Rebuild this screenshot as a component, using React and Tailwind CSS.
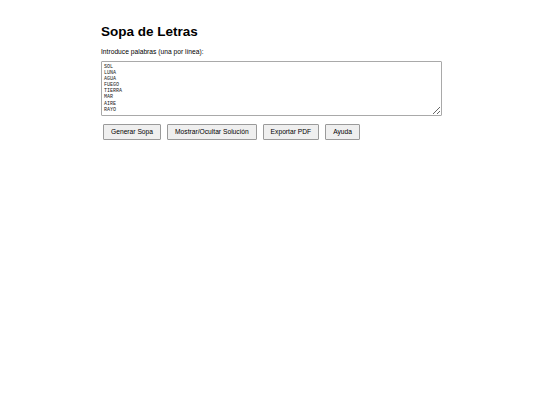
import React from 'react';

const palabras = ['SOL', 'LUNA', 'AGUA', 'FUEGO', 'TIERRA', 'MAR', 'AIRE', 'RAYO'];

const botones = ['Generar Sopa', 'Mostrar/Ocultar Solución', 'Exportar PDF', 'Ayuda'];

export default function App() {
  return (
    <div className="w-[540px] h-[405px] bg-white font-['Liberation_Sans',Arial,sans-serif] text-black">
      <div className="pl-[101px] pt-[23px]">
        <h1 className="text-[13.5px] leading-[17px] font-bold">Sopa de Letras</h1>
        <p className="mt-[8px] text-[6.7px] leading-[8px]">Introduce palabras (una por línea):</p>
        <textarea
          className="mt-[5px] block w-[341px] h-[55px] border border-[#a9a9a9] rounded-[1px] px-[2px] pt-[2px] font-['Liberation_Mono',monospace] text-[5px] leading-[6.1px] text-[#222] resize-y"
          defaultValue={palabras.join('\n')}
        />
        <div className="mt-[8px] ml-[2px] flex gap-[6px]">
          {botones.map((b) => (
            <button
              key={b}
              className="h-[16px] px-[7px] bg-[#efefef] border border-[#9a9a9a] rounded-[1px] text-[6.7px] leading-none"
            >
              {b}
            </button>
          ))}
        </div>
      </div>
    </div>
  );
}
